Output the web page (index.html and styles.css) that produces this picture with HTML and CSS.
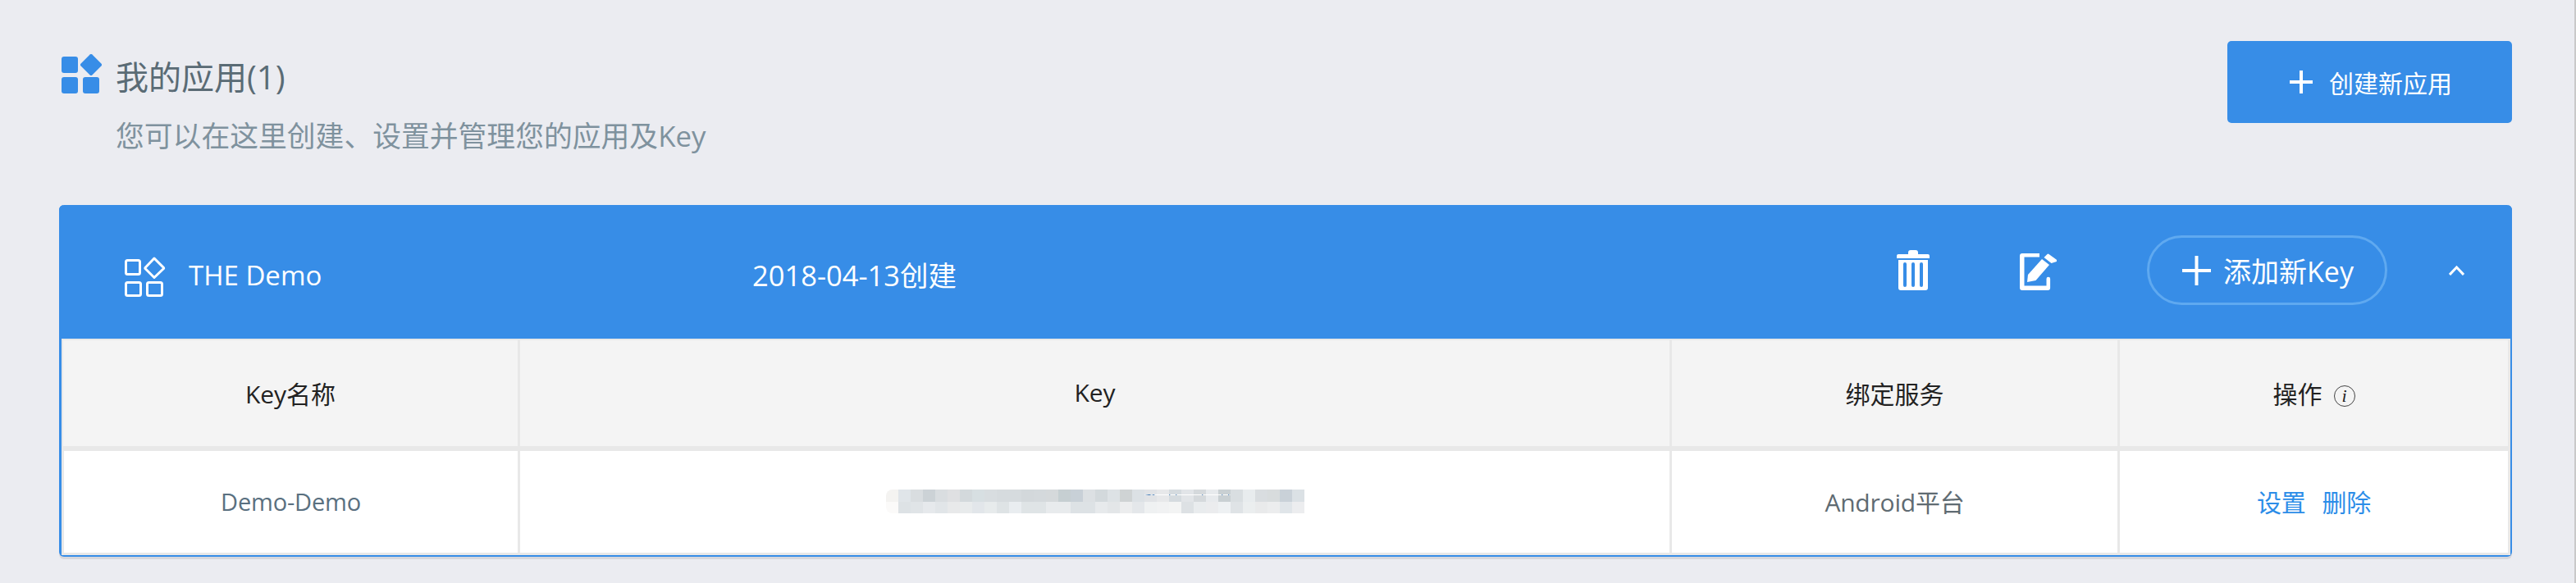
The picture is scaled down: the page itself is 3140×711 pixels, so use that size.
FILE: index.html
```html
<!DOCTYPE html>
<html lang="zh-CN">
<head>
    <meta charset="UTF-8">
    <meta name="viewport" content="width=device-width, initial-scale=1.0">
    <title>我的应用</title>
    <link rel="stylesheet" href="styles.css">
</head>
<body>
    <div class="page">
        <div class="page-head">
            <div class="page-title">
                <svg class="title-icon" viewBox="0 0 50 48" fill="#378de7">
                    <rect x="0" y="3" width="20" height="20" rx="3"/>
                    <rect x="0" y="28" width="20" height="20" rx="3"/>
                    <rect x="26" y="28" width="20" height="20" rx="3"/>
                    <path d="M34.600 .6a2 2 0 0 1 2.800 0L48.400 11.600a2 2 0 0 1 0 2.800L37.400 25.400a2 2 0 0 1-2.800 0L23.600 14.400a2 2 0 0 1 0-2.800z"/>
                </svg>
                <div>
                    <h1 class="title-text">我的应用(1)</h1>
                    <p class="title-sub">您可以在这里创建、设置并管理您的应用及Key</p>
                </div>
            </div>
            <button class="btn-create" type="button">
                <svg class="plus-small" viewBox="0 0 28 28" fill="#fff"><path d="M12 0h4v12h12v4H16v12h-4V16H0v-4h12z"/></svg>
                创建新应用
            </button>
        </div>

        <div class="app-card">
            <div class="app-head">
                <div class="app-name">
                    <svg class="app-icon" viewBox="0 0 50 49" fill="none" stroke="#fff" stroke-width="3">
                        <rect x="1.500" y="4.500" width="17" height="17" rx="2"/>
                        <rect x="1.500" y="31.500" width="18" height="16" rx="2"/>
                        <rect x="27.500" y="31.500" width="18" height="16" rx="2"/>
                        <path d="M36 2l11.500 11.500a1 1 0 0 1 0 1L36 25.500 25 14.500a1 1 0 0 1 0-1z" stroke-linejoin="round"/>
                    </svg>
                    <span>THE Demo</span>
                </div>
                <div class="app-date">2018-04-13创建</div>
                <div class="app-actions">
                    <svg class="icon-trash" viewBox="0 0 40 49" fill="#fff">
                        <path d="M14 5V3a3 3 0 0 1 3-3h6a3 3 0 0 1 3 3v2h12a2 2 0 0 1 2 2v3H0V7a2 2 0 0 1 2-2z"/>
                        <path fill-rule="evenodd" d="M2 12h36v34a3 3 0 0 1-3 3H5a3 3 0 0 1-3-3zM8 17v26a2 2 0 0 0 4 0V17a2 2 0 0 0-4 0zM18 17v26a2 2 0 0 0 4 0V17a2 2 0 0 0-4 0zM28 17v26a2 2 0 0 0 4 0V17a2 2 0 0 0-4 0z"/>
                    </svg>
                    <svg class="icon-edit" viewBox="0 0 45 45" fill="#fff">
                        <path d="M3 0h21v4.500H5.500v35h27V31a2.300 2.300 0 0 1 4.600 0v11a3 3 0 0 1-3 3H3a3 3 0 0 1-3-3V3a3 3 0 0 1 3-3z"/>
                        <path d="M9 35l1-9L27 7l9 7L19.500 33z"/>
                        <path d="M29.500 5l4-4a1.500 1.500 0 0 1 2 0l9 6.500a2 2 0 0 1 .3 2.500L38.500 12z"/>
                    </svg>
                    <button class="btn-add" type="button">
                        <svg class="plus-large" viewBox="0 0 35 36" fill="#fff"><path d="M15.500 0h4v16H35v4H19.500v16h-4V20H0v-4h15.500z"/></svg>
                        添加新Key
                    </button>
                    <svg class="icon-up" viewBox="0 0 19 12" fill="none" stroke="#fff" stroke-width="3"><path d="M1 11l8.500-9L18 11"/></svg>
                </div>
            </div>

            <table class="key-table">
                <colgroup>
                    <col class="col-name">
                    <col class="col-key">
                    <col class="col-service">
                    <col>
                </colgroup>
                <thead>
                    <tr>
                        <th>Key名称</th>
                        <th>Key</th>
                        <th>绑定服务</th>
                        <th>操作<span class="info-mark">i</span></th>
                    </tr>
                </thead>
                <tbody>
                    <tr>
                        <td class="key-name">Demo-Demo</td>
                        <td><div class="key-mask"></div></td>
                        <td>Android平台</td>
                        <td><a class="op-link" href="#">设置</a><a class="op-link" href="#">删除</a></td>
                    </tr>
                </tbody>
            </table>
        </div>
    </div>
</body>
</html>
```
FILE: styles.css
```css
* {
    box-sizing: border-box;
}

body {
    margin: 0;
    background-color: #ebecf1;
    font-family: "Open Sans", "Noto Sans CJK SC", sans-serif;
}

.page {
    height: 711px;
    padding: 50px 76px 0 72px;
    border-right: 2px solid #c9c9c9;
}

.page-head {
    display: flex;
    justify-content: space-between;
    align-items: flex-start;
    height: 200px;
}

.page-title {
    display: flex;
    gap: 16px;
    padding: 16px 0 0 3px;
}

.title-icon {
    width: 50px;
    height: 48px;
    flex-shrink: 0;
}

.title-text {
    margin: 5px 0 0;
    font-size: 40px;
    font-weight: 400;
    line-height: 46px;
    color: #5a6b75;
}

.title-sub {
    margin: 26px 0 0;
    font-size: 34.8px;
    line-height: 46px;
    color: #7f929e;
}

.btn-create {
    display: flex;
    align-items: center;
    justify-content: center;
    gap: 20px;
    width: 347px;
    height: 100px;
    padding: 0 0 0 3px;
    border: none;
    border-radius: 5px;
    background-color: #378de7;
    color: #fff;
    font-family: inherit;
    font-size: 30px;
}

.plus-small {
    width: 28px;
    height: 28px;
}

.app-card {
    border: solid #378de7;
    border-width: 0 2px 2px 3px;
    border-radius: 6px;
    box-shadow: 0 3px 0 #d6d7dc;
    height: 429px;
    background-color: #fff;
}

.app-head {
    display: flex;
    align-items: center;
    height: 163px;
    margin-left: -3px;
    margin-right: -2px;
    padding: 0 58px 4px 80px;
    border-radius: 6px 6px 0 0;
    background-color: #378de7;
    color: #fff;
}

.app-name {
    display: flex;
    align-items: center;
    gap: 28px;
    width: 765px;
    margin-top: 12px;
    font-size: 33px;
}

.app-icon {
    width: 50px;
    height: 49px;
    margin-top: 4px;
}

.app-date {
    margin-top: 9px;
    font-size: 34.5px;
}

.app-actions {
    display: flex;
    align-items: center;
    margin-left: auto;
}

.icon-trash {
    width: 40px;
    height: 49px;
    margin-right: 110px;
}

.icon-edit {
    width: 45px;
    height: 45px;
    margin-top: 4px;
    margin-right: 110px;
}

.btn-add {
    display: flex;
    align-items: center;
    gap: 15px;
    width: 293px;
    height: 85px;
    margin-right: 75px;
    padding: 0 0 0 40px;
    border: 3px solid #5fa9f0;
    border-radius: 43px;
    background: none;
    color: #fff;
    font-family: inherit;
    font-size: 34px;
    white-space: nowrap;
}

.plus-large {
    width: 35px;
    height: 36px;
    flex-shrink: 0;
}

.icon-up {
    width: 19px;
    height: 12px;
}

.key-table {
    width: 100%;
    border-collapse: separate;
    border-spacing: 0;
    table-layout: fixed;
    font-size: 30px;
    text-align: center;
}

.col-name {
    width: 559px;
}

.col-key {
    width: 1404px;
}

.col-service {
    width: 546px;
}

.key-table th {
    height: 137px;
    padding: 0 0 2px;
    border-top: 2px solid #e8e8e8;
    border-bottom: 6px solid #e8e8e8;
    border-right: 3px solid #e8e8e8;
    background-color: #f4f4f4;
    font-weight: 400;
    color: #222;
}

.key-table th:first-child {
    border-left: 2px solid #e8e8e8;
}

.key-table td {
    height: 127px;
    padding: 0 0 2px;
    border-bottom: 3px solid #e8e8e8;
    border-right: 3px solid #e8e8e8;
    color: #5f6b72;
    letter-spacing: -0.2px;
}

.key-table td:first-child {
    border-left: 3px solid #e8e8e8;
}

.key-table .key-name {
    font-size: 29px;
    color: #5a7080;
}

.info-mark {
    display: inline-block;
    width: 26px;
    height: 26px;
    margin-left: 14px;
    border: 1px solid #444;
    border-radius: 50%;
    font-family: "Liberation Serif", serif;
    font-size: 22px;
    font-style: italic;
    line-height: 24px;
    vertical-align: 2px;
}

/* the key value is pixelated out in the original */
.key-mask {
    width: 510px;
    height: 29px;
    margin-left: 446px;
    border-radius: 8px 0 0 8px;
    background-color: #fff;
    background-repeat: no-repeat;
    background-size: 510px 1px, 510px 15px, 510px 14px;
    background-position: 0 6px, 0 0, 0 15px;
    background-image:
        linear-gradient(90deg, transparent 315px, #fff 315px, #2f6fb0 321px, #fff 324px, #2f6fb0 326px, #fff 328px, #fff 345px, #2f6fb0 345px, #fff 347px, #fff 353px, #2f6fb0 353px, #fff 355px, #fff 385px, #2f6fb0 385px, #fff 387px, #fff 409px, #2f6fb0 409px, #fff 411px, #fff 417px, #2f6fb0 417px, #fff 419px, transparent 420px),
        linear-gradient(90deg, #f4f3f1 15px,
            #e0e5e9 0 30px, #d9dde0 0 45px, #ccd2d6 0 60px, #d9dde0 0 75px, #dfe0e2 0 90px, #d3d9dc 0 105px,
            #d7dfe2 0 120px, #d8dde0 0 135px, #d6dbde 0 165px, #d3d8db 0 180px, #d4d9dc 0 195px, #d5d9db 0 210px,
            #c6cfd2 0 225px, #c8d0d7 0 240px, #dce0e3 0 255px, #d3d9dc 0 270px, #dde2e5 0 285px, #cfd3d4 0 300px,
            #dce1e5 0 315px, #e1e3e6 0 330px, #e7e8ea 0 345px, #d5dbdf 0 360px, #e2e5e8 0 375px, #d5d9dc 0 390px,
            #e7eaed 0 405px, #c9d0d3 0 420px, #d9dee1 0 435px, #e8ecee 0 450px, #d9dde0 0 465px, #d8dcdd 0 480px,
            #c9d1d8 0 495px, #dbe1e5 0 510px),
        linear-gradient(90deg, #fbfaf9 15px,
            #dde2e5 0 30px, #e0e4e7 0 45px, #e6e9ec 0 60px, #e1e5e8 0 75px, #e8e9ea 0 90px, #e8ebec 0 105px,
            #e2e6ea 0 120px, #e7ebec 0 135px, #dee3e5 0 150px, #e9edf0 0 165px, #dfe4e6 0 195px, #e8ebed 0 225px,
            #dde2e5 0 255px, #e7eaec 0 270px, #e3e6e8 0 285px, #ecedee 0 300px, #e4e7ea 0 315px, #eff1f2 0 330px,
            #f1f2f3 0 345px, #f3f4f4 0 360px, #dde1e4 0 375px, #e9ecee 0 390px, #ebecee 0 405px, #eef1f3 0 420px,
            #dfe3e6 0 435px, #ebeeef 0 450px, #e9eaeb 0 465px, #ecedee 0 480px, #e0e5e9 0 495px, #ecedef 0 510px);
}

.op-link {
    color: #2c8de8;
    text-decoration: none;
}

.op-link + .op-link {
    margin-left: 20px;
}
```
